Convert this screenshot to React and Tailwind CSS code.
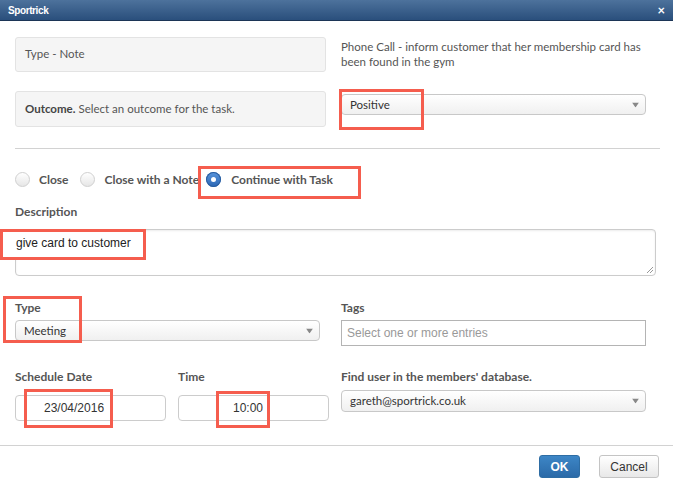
const pt = { fontFamily: "Lato, 'Noto Sans', sans-serif" };
const arial = { fontFamily: "'Liberation Sans', Arial, sans-serif" };

function Arrow() {
  return (
    <svg width="7" height="5" viewBox="0 0 7 5" className="absolute right-[6px] top-1/2 -translate-y-1/2">
      <path d="M0 0 L7 0 L3.5 5 Z" fill="#888" />
    </svg>
  );
}

function Select({ value, className }) {
  return (
    <div
      className={"relative flex items-center rounded-[4px] border border-[#c8c8c8] bg-gradient-to-b from-white to-[#f0f0f0] pl-[8px] text-[11.5px] text-[#333] " + className}
    >
      {value}
      <Arrow />
    </div>
  );
}

function Radio({ checked }) {
  if (checked)
    return (
      <span className="flex h-[15px] w-[15px] items-center justify-center rounded-full bg-gradient-to-b from-[#5a96dc] to-[#2a66b4] shadow-[inset_0_0_0_1px_#2a5d9f]">
        <span className="h-[5px] w-[5px] rounded-full bg-white" />
      </span>
    );
  return <span className="h-[15px] w-[15px] rounded-full border border-[#d0d0d0] bg-gradient-to-b from-white to-[#e6e6e6]" />;
}

function Mark({ className }) {
  return <div className={"pointer-events-none absolute border-[3px] border-[#f55d4e] " + className} />;
}

export default function App() {
  return (
    <div className="relative h-[491px] w-[673px] overflow-hidden bg-white" style={pt}>
      {/* title bar */}
      <div className="flex h-[21px] items-center justify-between border-b border-[#1c3556] bg-gradient-to-b from-[#4d729c] to-[#2a4f7c] px-[8px] text-white">
        <span className="text-[10px] font-bold tracking-[-0.4px]" style={arial}>Sportrick</span>
        <span className="text-[13px] font-bold leading-none">×</span>
      </div>

      <div className="px-[15px]">
        {/* top rows */}
        <div className="mt-[16px] flex gap-[15px]">
          <div className="flex h-[35px] w-[311px] items-center rounded-[3px] border border-[#e3e3e3] bg-[#f5f5f5] px-[9px] pb-[2px] text-[11.5px] text-[#555]">
            Type - Note
          </div>
          <div className="pt-[2px] text-[11.5px] leading-[15px] text-[#555]">
            Phone Call - inform customer that her membership card has
            <br />
            been found in the gym
          </div>
        </div>
        <div className="mt-[19px] flex gap-[15px]">
          <div className="flex h-[36px] w-[311px] items-center rounded-[3px] border border-[#e3e3e3] bg-[#f5f5f5] px-[9px] text-[11.5px] text-[#555]">
            <b className="text-[#444]">Outcome.</b>&nbsp;Select an outcome for the task.
          </div>
          <Select value="Positive" className="mt-[3px] h-[21px] w-[305px]" />
        </div>

        <div className="mt-[21px] h-px w-[645px] bg-[#d2d2d2]" />

        {/* radio row */}
        <div className="mt-[23px] flex h-[15px] items-center text-[12px] font-bold text-[#555]">
          <Radio />
          <span className="ml-[9px] mr-[11px]">Close</span>
          <Radio />
          <span className="ml-[10px] mr-[7px]">Close with a Note</span>
          <Radio checked />
          <span className="ml-[10px]">Continue with Task</span>
        </div>

        <div className="mt-[17px] text-[12px] font-bold leading-[16px] text-[#555]">Description</div>
        <div className="relative mt-[9px] h-[47px] w-[641px] rounded-[4px] border border-[#ccc] shadow-[inset_0_1px_2px_rgba(0,0,0,0.08)]">
          <svg width="8" height="8" className="absolute bottom-[1px] right-[1px]" viewBox="0 0 8 8">
            <path d="M7 1 L1 7 M7 4 L4 7" stroke="#999" strokeWidth="1" />
          </svg>
        </div>

        {/* type / tags */}
        <div className="mt-[24px] flex gap-[21px]">
          <div className="w-[305px]">
            <div className="text-[12px] font-bold leading-[16px] text-[#555]">Type</div>
            <Select value="Meeting" className="mt-[4px] h-[21px] w-[305px]" />
          </div>
          <div className="w-[305px]">
            <div className="text-[12px] font-bold leading-[16px] text-[#555]">Tags</div>
            <div className="mt-[4px] flex h-[26px] items-center border border-[#b4b4b4] px-[5px] text-[12px] text-[#999]" style={arial}>
              Select one or more entries
            </div>
          </div>
        </div>

        {/* date / time / user */}
        <div className="mt-[23px] flex">
          <div className="w-[163px]">
            <div className="text-[12px] font-bold leading-[16px] text-[#555]">Schedule Date</div>
            <div className="mt-[10px] flex h-[26px] w-[151px] items-center rounded-[4px] border border-[#ccc] pl-[28px] text-[12px] text-[#333]" style={arial}>
              23/04/2016
            </div>
          </div>
          <div className="w-[163px]">
            <div className="text-[12px] font-bold leading-[16px] text-[#555]">Time</div>
            <div className="mt-[10px] flex h-[26px] w-[151px] items-center rounded-[4px] border border-[#ccc] pl-[54px] text-[12px] text-[#333]" style={arial}>
              10:00
            </div>
          </div>
          <div className="w-[305px]">
            <div className="text-[12px] font-bold leading-[16px] text-[#555]">Find user in the members' database.</div>
            <Select value="gareth@sportrick.co.uk" className="mt-[5px] h-[22px] w-[305px]" />
          </div>
        </div>
      </div>

      <div className="mt-[24px] h-px w-full bg-[#d2d2d2]" />

      <div className="mt-[9px] flex justify-end gap-[19px] pr-[14px] text-[12px]" style={arial}>
        <button className="h-[23px] w-[41px] rounded-[3px] border border-[#2e6da4] bg-gradient-to-b from-[#3d86c6] to-[#2b6aa8] font-bold text-white">
          OK
        </button>
        <button className="h-[23px] w-[60px] rounded-[3px] border border-[#c4c4c4] bg-gradient-to-b from-white to-[#e8e8e8] text-[#333]">
          Cancel
        </button>
      </div>

      {/* annotation boxes */}
      <Mark className="left-[339px] top-[89px] h-[41px] w-[85px]" />
      <Mark className="left-[198px] top-[166px] h-[33px] w-[163px]" />
      <Mark className="left-0 top-[229px] h-[31px] w-[146px] bg-white" />
      <Mark className="left-[3px] top-[296px] h-[47px] w-[79px]" />
      <Mark className="left-[24px] top-[389px] h-[39px] w-[89px]" />
      <Mark className="left-[216px] top-[391px] h-[37px] w-[54px]" />
      <div className="absolute left-[16px] top-[234px] text-[12px] text-[#222]" style={arial}>
        give card to customer
      </div>
    </div>
  );
}
